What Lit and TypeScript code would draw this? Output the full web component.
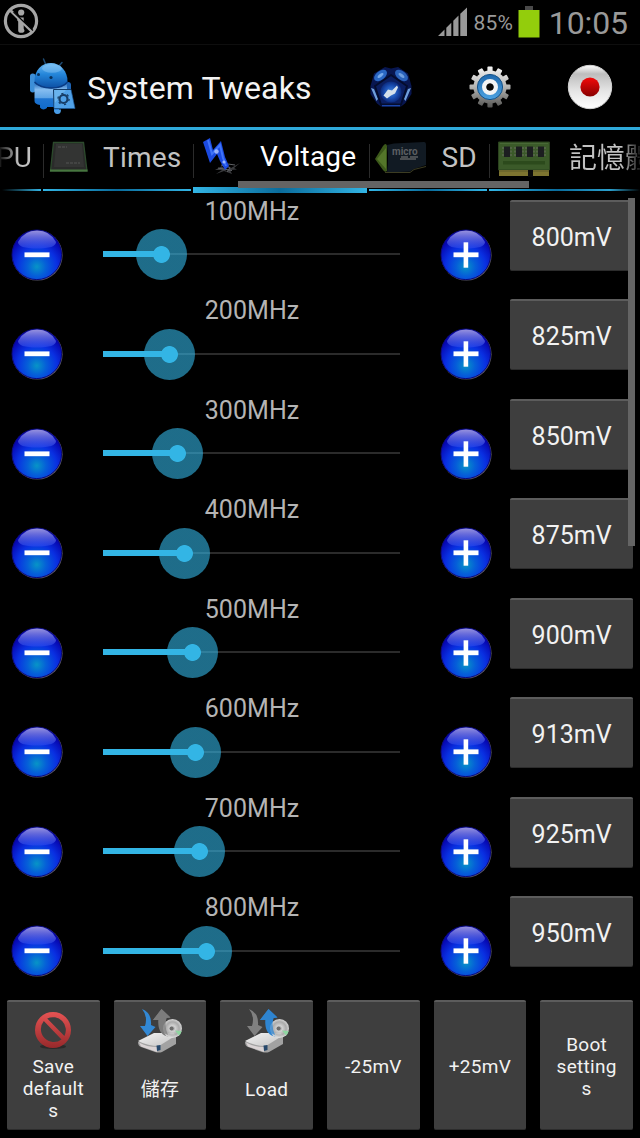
import {LitElement, html, css, svg, nothing} from 'lit';
import {customElement, property, state} from 'lit/decorators.js';
import {classMap} from 'lit/directives/class-map.js';

interface Step {
  mhz: number;
  mv: number;
  pos: number; // thumb offset on the track, px
}

const steps: Step[] = [
  {mhz: 100, mv: 800, pos: 58.7},
  {mhz: 200, mv: 825, pos: 66.5},
  {mhz: 300, mv: 850, pos: 74},
  {mhz: 400, mv: 875, pos: 81},
  {mhz: 500, mv: 900, pos: 89},
  {mhz: 600, mv: 913, pos: 92.5},
  {mhz: 700, mv: 925, pos: 96},
  {mhz: 800, mv: 950, pos: 103},
];

const icons = {
  noInfo: svg`<svg width="36" height="36" viewBox="0 0 36 36">
    <circle cx="18" cy="18" r="15.6" fill="none" stroke="#a6a6a6" stroke-width="3.2"/>
    <path d="M7.500 7.500L29 28.500" stroke="#a6a6a6" stroke-width="3"/>
    <circle cx="18.200" cy="9.500" r="4.200" fill="#000"/>
    <circle cx="18.200" cy="9.500" r="3.100" fill="#a6a6a6"/>
    <path d="M14.300 14.500H20.700V25.500L21.500 27.500Q21.500 29.800 18.200 29.800Q15.200 29.800 15.200 27.500V18.500L14.300 17.500Z" fill="#a6a6a6"/>
    <path d="M10.500 9L30 27.500" stroke="#000" stroke-width="1.100"/>
  </svg>`,

  signal: svg`<svg width="30" height="30" viewBox="0 0 30 30" fill="#999">
    <path d="M0 29L6.5 22.5V29Z M8.3 20.7L13.3 15.7V29H8.3Z M15.3 13.7L20.5 8.5V29H15.3Z M22.3 6.7L29 .4V29H22.3Z"/>
  </svg>`,

  battery: svg`<svg width="22" height="32" viewBox="0 0 22 32">
    <path d="M7 0H15V4H7Z" fill="#4a4a4a"/>
    <path d="M.5 4H21.5V31.5H.5Z" fill="#93cd0c"/>
  </svg>`,

  droid: svg`<svg width="48" height="58" viewBox="0 0 48 58">
    <defs>
      <linearGradient id="dHead" x1="0" y1="0" x2="0" y2="1">
        <stop offset="0" stop-color="#6bb9f2"/><stop offset=".45" stop-color="#2486da"/><stop offset="1" stop-color="#0c4fa4"/>
      </linearGradient>
      <linearGradient id="dBody" x1="0" y1="0" x2="0" y2="1">
        <stop offset="0" stop-color="#2168b8"/><stop offset=".22" stop-color="#86bdf0"/><stop offset=".48" stop-color="#5ea4e6"/><stop offset=".52" stop-color="#1e74d0"/><stop offset="1" stop-color="#0c66c8"/>
      </linearGradient>
    </defs>
    <path d="M18 8L15.5 2 M31 9L34 5.500" stroke="#1d4a72" stroke-width="1.500" stroke-linecap="round"/>
    <rect x="2" y="16.500" width="5.500" height="19" rx="2.700" fill="#3d8fd8"/>
    <rect x="37" y="25" width="6" height="14" rx="3" fill="#1e64b4"/>
    <path d="M6.500 26Q22 36 39 27V47H31V54Q29 58.500 26 54.500V50H19V51Q15 54 12 50.500V48Q6.500 47 6.500 44Z" fill="url(#dBody)"/>
    <path d="M6.500 25C6 13 14 6 23 6C32 6 40 14 39.500 25C33 33 14 33 6.500 25Z" fill="url(#dHead)"/>
    <path d="M6.500 25C14 33 33 33 39.500 25" fill="none" stroke="#0a3c86" stroke-width="1.400"/>
    <ellipse cx="24" cy="11.500" rx="10" ry="4.200" fill="#a5d8fb" opacity=".35"/>
    <circle cx="10.500" cy="17.500" r="1.500" fill="#093058"/>
    <circle cx="23" cy="20.500" r="1.600" fill="#093058"/>
    <path d="M25.500 32.500H43L47 51.500H26Z" fill="#69b3ee" stroke="#123b68" stroke-width="1"/>
    <path d="M26 47L38 33H43L47 51.500H26Z" fill="#3f95e2" opacity=".6"/>
    <circle cx="35.500" cy="42" r="4" fill="none" stroke="#173d66" stroke-width="2.200"/>
    <circle cx="35.500" cy="42" r="5.600" fill="none" stroke="#173d66" stroke-width="1.300" stroke-dasharray="2.200 3.660"/>
    <path d="M26 52.500H33Q33 57 29.500 57T26 52.500Z" fill="#4a9de6"/>
  </svg>`,

  dodeca: svg`<svg width="44" height="42" viewBox="0 0 44 42">
    <defs>
      <radialGradient id="pFace"><stop offset="0" stop-color="#3f84dc"/><stop offset=".6" stop-color="#1a4eb2"/><stop offset="1" stop-color="#0b2a7c"/></radialGradient>
    </defs>
    <path d="M16 1L22 2.500L29 1L39 7.500L42.500 20V28L36 37.500L32 40.500H12L8 37.500L1.500 28V20L5 7.500Z" fill="#081650"/>
    <ellipse cx="11.500" cy="9.500" rx="7.500" ry="4.400" transform="rotate(-38 11.500 9.500)" fill="#2a68c4"/>
    <ellipse cx="32.500" cy="9.500" rx="7.500" ry="4.400" transform="rotate(38 32.500 9.500)" fill="#2a62ba"/>
    <ellipse cx="11.500" cy="9.500" rx="3.500" ry="1.500" transform="rotate(-38 11.500 9.500)" fill="#78aaea"/>
    <ellipse cx="32.500" cy="9.500" rx="3.500" ry="1.500" transform="rotate(38 32.500 9.500)" fill="#6f9fdf"/>
    <path d="M2 22L5 23L9 33L7.500 35Z M42 22L39 23L35 33L36.500 35Z" fill="#6f9fdc"/>
    <path d="M22 9L38 20L32 38.500H12L6 20Z" fill="#0b1e60" stroke="#040c2c" stroke-width="1.800"/>
    <circle cx="22" cy="26" r="10.600" fill="url(#pFace)"/>
    <path d="M14.500 29.500L19 23.500L23 24.500L28 19.500L29 21.500L26 27.500L22 29.500L18 32.500Z" fill="#d4e0ec"/>
    <path d="M13 39.700H31" stroke="#1a45a8" stroke-width="1.400"/>
  </svg>`,

  gear: svg`<svg width="44" height="44" viewBox="-22 -22 44 44">
    <defs>
      <linearGradient id="gMetal" x1="0" y1="0" x2="0" y2="1">
        <stop offset="0" stop-color="#fafafa"/><stop offset=".5" stop-color="#b4b4b2"/><stop offset="1" stop-color="#4e4e4c"/>
      </linearGradient>
      <linearGradient id="gBlue" x1="0" y1="0" x2="0" y2="1">
        <stop offset="0" stop-color="#1e68ad"/><stop offset="1" stop-color="#4da3e2"/>
      </linearGradient>
    </defs>
    <mask id="gMask" maskUnits="userSpaceOnUse" x="-22" y="-22" width="44" height="44">
      <circle r="16.6" fill="#fff"/>
      ${[0, 30, 60, 90, 120, 150].map(a => svg`<rect x="-2.6" y="-20.5" width="5.2" height="41" rx="1" fill="#fff" transform="rotate(${a})"/>`)}
    </mask>
    <rect x="-22" y="-22" width="44" height="44" fill="url(#gMetal)" mask="url(#gMask)"/>
    <circle r="12.6" fill="url(#gBlue)" stroke="#165288" stroke-width="1"/>
    <circle r="5.8" fill="#1c1c1c" stroke="#f2f4f5" stroke-width="4.4"/>
    <circle r="3.5" fill="#080808"/>
  </svg>`,

  record: svg`<svg width="46" height="46" viewBox="0 0 46 46">
    <defs>
      <linearGradient id="rShell" x1="0" y1="0" x2="0" y2="1">
        <stop offset="0" stop-color="#fff"/><stop offset=".2" stop-color="#bdbdbd"/><stop offset=".6" stop-color="#e6e6e6"/><stop offset="1" stop-color="#fff"/>
      </linearGradient>
      <linearGradient id="rDot" x1="0" y1="0" x2="0" y2="1">
        <stop offset="0" stop-color="#f40a0a"/><stop offset="1" stop-color="#870000"/>
      </linearGradient>
    </defs>
    <circle cx="23" cy="23" r="21.700" fill="url(#rShell)" stroke="#d2d2d2" stroke-width="1"/>
    <circle cx="23" cy="23" r="9.600" fill="url(#rDot)"/>
  </svg>`,

  cpu: svg`<svg width="40" height="32" viewBox="0 0 40 32">
    <path d="M4.500 1.500H34.500L38 30H1.500Z" fill="#2a2b2a" stroke="#2c4a2c" stroke-width="1.300"/>
    <path d="M1 29.500H38.500" stroke="#47763f" stroke-width="2"/>
    <path d="M7 3H33L35 26H5Z" fill="#333433"/>
    <path d="M9 6H18 M17 22H31" stroke="#4a4a4a" stroke-width="1.500" stroke-dasharray="3 1"/>
  </svg>`,

  bolt: svg`<svg width="40" height="40" viewBox="0 0 40 40">
    <path d="M13 33L22 28L29 31L38 26L32 31L35 32.500L28 33L30 37L22 34L14 37L20 33Z" fill="#3a3b3e"/>
    <path d="M19 28L28 30.500L25 35 M16 31L30 33.500 M26 27L33 28" stroke="#606266" stroke-width="1"/>
    <path d="M1 5L8 1L11 13L19 4L23 20L27 29L23 33L18 24L15 17L8 26Z" fill="#1b4ae0"/>
    <path d="M6 3L10 17L18 8L21 21L24 29" fill="none" stroke="#3f74fa" stroke-width="2"/>
    <circle cx="14.500" cy="14.500" r="2.200" fill="#b4c8ff" opacity=".8"/>
    <circle cx="22" cy="25" r="1.600" fill="#9ab8ff"/>
  </svg>`,

  sd: svg`<svg width="54" height="34" viewBox="0 0 54 34">
    <path d="M1 18L9 5Q12 1 13 5V30Q11 32 9 29Z" fill="#3c581a"/>
    <path d="M3 18L12 7V28Z" fill="#54762a"/>
    <path d="M13 4L20 2.500L50 1Q52 1 52 4V24L40 28L36 30.500L13 31.500Q15 17 13 4Z" fill="#111a23"/>
    <path d="M11 31.500L36 31.500L40 28.500L52 25.500" fill="none" stroke="#3c3c22" stroke-width="1"/>
    <text x="18" y="14" class="micro">micro</text>
    <path d="M27 16H34 M36 16H44 M26 18H42" stroke="#5c5f62" stroke-width="1.500"/>
  </svg>`,

  ram: svg`<svg width="52" height="36" viewBox="0 0 52 36">
    <path d="M.5 1H51.500V29H.5Z" fill="#3b5a29" stroke="#2b421e" stroke-width="1"/>
    <path d="M2 2.500H50" stroke="#486836" stroke-width="1.200"/>
    <path d="M5 20H47V23.500H5Z" fill="#2c4a1c"/>
    <path d="M6 5.500H12V16H6Z M18 5.500H24V16H18Z M29 5.500H35V16H29Z M40 5.500H46V16H40Z" fill="#1c1e20"/>
    <path d="M5 6V15M13 6V15M17 6V15M25 6V15M28 6V15M36 6V15M39 6V15M47 6V15" stroke="#6a6e62" stroke-width="1" stroke-dasharray="2 1.500"/>
    <path d="M1 29H30V35H1Z M35 29H51V35H35Z" fill="#7d7430"/>
    <path d="M1 30H51" stroke="#5e5a28" stroke-width="1"/>
    <path d="M30 29H35V36H30Z" fill="#0a0a0a"/>
  </svg>`,

  forbid: svg`<svg width="44" height="44" viewBox="0 0 44 44">
    <defs>
      <linearGradient id="fRed" x1="0" y1="0" x2="0" y2="1">
        <stop offset="0" stop-color="#e65353"/><stop offset="1" stop-color="#97292b"/>
      </linearGradient>
    </defs>
    <ellipse cx="22" cy="38.500" rx="13" ry="2.600" fill="#262626" opacity=".8"/>
    <path fill="url(#fRed)" fill-rule="evenodd" d="M22 4A18 18 0 1 1 22 40A18 18 0 1 1 22 4Z M12.800 13A12.900 12.900 0 0 0 30.500 31.500Z M16.200 10.500A12.900 12.900 0 0 1 33.400 28Z"/>
  </svg>`,
};

// drive with two arrows, the active one is blue
const drive = (active: 'save' | 'load') => {
  const down = active === 'save' ? '#3288d4' : '#808080';
  const up = active === 'load' ? '#2f84d0' : '#7c7c7c';
  return svg`<svg width="46" height="46" viewBox="0 0 46 46">
    <defs>
      <radialGradient id="hdDisc"><stop offset="0" stop-color="#8d8d8d"/><stop offset=".3" stop-color="#dedede"/><stop offset=".7" stop-color="#b4b4b4"/><stop offset="1" stop-color="#e4e4e4"/></radialGradient>
      <linearGradient id="hdTop" x1="0" y1="0" x2="1" y2="1"><stop offset="0" stop-color="#f4f4f4"/><stop offset="1" stop-color="#c4c4c4"/></linearGradient>
    </defs>
    <path d="M1 34L18 25.500H37L39 27V36L25 44Q22 45 18 44L4 39Q1 38 1 34Z" fill="#a2a2a2"/>
    <path d="M1 33L17 25H37L38 28L22 38Q11 38 1 33Z" fill="url(#hdTop)"/>
    <path d="M2 34.500Q10 39 20 39V44L4 38.500Z" fill="#dad4d5"/>
    <path d="M19.500 37.500L23.500 37V42L20 43Z" fill="#26486b"/>
    <path d="M24.500 1L33.500 9.500L29.500 10Q27 18 32.500 29Q20 27 21.500 12H16Z" fill="${up}"/>
    <circle cx="35.500" cy="20.500" r="9.500" fill="url(#hdDisc)" opacity=".92"/>
    <path d="M38 22.500L44.500 23Q44 26 42 27.500Z" fill="#8fd6a1"/>
    <circle cx="34.500" cy="20.500" r="2" fill="#6c6c6c"/>
    <path d="M24.500 1L33.500 9.500L29.500 10Q27 18 31 27Q21 25 21.500 12H16Z" fill="${up}" opacity=".75"/>
    <path d="M5 1Q15 5 14 17L18.500 19L10.500 28L3 18L8 18Q11 8 5 1Z" fill="${down}"/>
  </svg>`;
};

@customElement('glossy-ball')
export class GlossyBall extends LitElement {
  static override styles = css`
    :host {
      display: block;
      width: 54px;
      height: 54px;
    }
    svg {
      display: block;
    }
  `;

  @property()
  sign = 'minus';

  override render() {
    return html`
      <svg width="54" height="54" viewBox="0 0 54 54">
        <defs>
          <radialGradient id="ball" cx=".5" cy=".74" r=".62">
            <stop offset="0" stop-color="#0795c6"/>
            <stop offset=".3" stop-color="#0560d8"/>
            <stop offset=".65" stop-color="#0930e2"/>
            <stop offset="1" stop-color="#0606b0"/>
          </radialGradient>
          <linearGradient id="shine" x1="0" y1="0" x2="0" y2="1">
            <stop offset="0" stop-color="#a09ae0" stop-opacity=".95"/>
            <stop offset="1" stop-color="#3350ee" stop-opacity=".5"/>
          </linearGradient>
        </defs>
        <circle cx="27.300" cy="27.300" r="25.300" fill="#5c5a68"/>
        <circle cx="26.800" cy="26.800" r="24.800" fill="url(#ball)" stroke="#08087c" stroke-width="1"/>
        <path d="M8 14Q14 2.500 27 2.500T46 14Q46 20.500 27 20.500T8 14Z" fill="url(#shine)"/>
        <path d="M14.500 24.400H39.500V29.200H14.500Z" fill="#fff"/>
        ${this.sign === 'plus' ? svg`<path d="M24.600 14.300H29.200V39.700H24.600Z" fill="#fff"/>` : nothing}
      </svg>
    `;
  }
}

@customElement('voltage-row')
export class VoltageRow extends LitElement {
  static override styles = css`
    :host {
      display: grid;
      grid-template-columns: 74px 356px 71px 132px;
      align-items: start;
      height: 99.5px;
    }

    glossy-ball {
      margin-top: 30.600px;
      justify-self: center;
    }

    .label {
      height: 28px;
      line-height: 28px;
      padding-top: .6px;
      box-sizing: border-box;
      text-align: center;
      font-size: 25px;
      letter-spacing: .05px;
      color: #b4b4b4;
    }

    .slider {
      position: relative;
      width: 297px;
      height: 58px;
      margin: 0 0 0 29px;
      display: flex;
      align-items: center;
    }

    .track {
      width: 100%;
      height: 2px;
      background: #2b2b2b;
    }

    .fill {
      position: absolute;
      left: 0;
      top: 26px;
      height: 6px;
      background: #33b5e5;
    }

    .thumb {
      position: absolute;
      top: 4px;
      width: 51px;
      height: 51px;
      margin-left: -25.5px;
      border-radius: 50%;
      background: radial-gradient(circle, #33b5e5 8px, rgba(51, 181, 229, .6) 8.800px);
    }

    .mv {
      margin: 2.700px 0 0 9.400px;
      width: 122.600px;
      height: 71px;
      box-sizing: border-box;
      border: 0;
      border-top: 2px solid #5c5c5c;
      border-bottom: 1px solid #2c2c2c;
      border-radius: 2px;
      padding: 3px 0 0;
      background: #3e3e3e;
      color: #f2f2f2;
      font: 25px Roboto, sans-serif;
      letter-spacing: .05px;
    }
  `;

  @property({type: Object})
  step!: Step;

  override render() {
    return html`
      <glossy-ball sign="minus"></glossy-ball>
      <div>
        <div class="label">${this.step.mhz}MHz</div>
        <div class="slider">
          <div class="track"></div>
          <div class="fill" style="width: ${this.step.pos}px"></div>
          <div class="thumb" style="left: ${this.step.pos}px"></div>
        </div>
      </div>
      <glossy-ball sign="plus"></glossy-ball>
      <button class="mv">${this.step.mv}mV</button>
    `;
  }
}

@customElement('app-root')
export class AppRoot extends LitElement {
  static override styles = css`
    * {
      box-sizing: border-box;
    }

    :host {
      display: flex;
      flex-direction: column;
      width: 640px;
      height: 1138px;
      overflow: hidden;
      background: #000;
      color: #f3f3f3;
      font-family: Roboto, "Noto Sans CJK TC", sans-serif;
    }

    svg {
      display: block;
      flex: none;
    }

    .status {
      height: 45px;
      flex: none;
      display: flex;
      align-items: center;
      padding: 0 12px 1px 2.500px;
      border-bottom: 1px solid #0e0e0e;
      color: #999;
    }

    .status > svg {
      margin-bottom: 1px;
    }

    .status .right {
      margin-left: auto;
      display: flex;
      align-items: center;
    }

    .right svg {
      margin-top: 1px;
    }

    .percent {
      margin: 3px 4.500px 0 5px;
      font-size: 21px;
      letter-spacing: .3px;
    }

    .clock {
      margin-left: 9px;
      font-size: 32px;
      line-height: 40px;
      padding-top: 2px;
      letter-spacing: -.1px;
    }

    .header {
      height: 85px;
      flex: none;
      display: flex;
      align-items: center;
      padding: 0 27px 0 28px;
      border-bottom: 3px solid #2fa9da;
    }

    .title {
      margin: 3px auto 0 11px;
      font-size: 32px;
      letter-spacing: .14px;
    }

    .actions {
      display: flex;
      align-items: center;
      gap: 55px;
      padding-top: 1px;
    }

    .tabs {
      position: relative;
      height: 63px;
      flex: none;
      display: grid;
      grid-template-columns: 43px 150px 175.5px 120.5px 151px;
      overflow: hidden;
    }

    .tab {
      display: flex;
      flex-direction: column;
      overflow: hidden;
      color: #c2c2c2;
      font-size: 28px;
      white-space: nowrap;
    }

    .cell {
      height: 34px;
      flex: none;
      margin-top: 14px;
      display: flex;
      align-items: center;
      border-left: 1.500px solid #2b2b2b;
    }

    .cell span {
      line-height: 34px;
      margin-top: -6px;
    }

    .strip {
      height: 2px;
      flex: none;
      margin: 11px 2px 0 0;
      background: linear-gradient(90deg, #33b5e5, #0a6c9c 50%, #33b5e5);
    }

    .tab.active {
      color: #fff;
    }

    .tab.active .strip {
      height: 6px;
      margin-top: 9px;
    }

    .tab.first .cell {
      border: 0;
      justify-content: flex-end;
      padding-right: 11px;
    }

    .tab.first span {
      background: linear-gradient(90deg, #000 36%, #c2c2c2 75%);
      -webkit-background-clip: text;
      color: transparent;
    }

    .tab.first .strip {
      background: linear-gradient(90deg, #000 2px, #33b5e5);
    }

    .tab.last span {
      margin-top: -4px;
      background: linear-gradient(90deg, #c2c2c2 52px, #000 74px);
      -webkit-background-clip: text;
      color: transparent;
    }

    .tab.last .strip {
      margin-right: 0;
      background: linear-gradient(90deg, #33b5e5, #0a6c9c 45%, #2b9fcc 80%, #000);
    }

    .times svg { margin: -8px 14px 0 5px; }
    .times span { letter-spacing: .2px; }
    .voltage svg { margin: -9px 18px 0 8px; }
    .voltage .cell span { margin-top: -9px; letter-spacing: .2px; }
    .sd svg { margin: -7px 14px 0 4px; }
    .mem svg { margin: -5px 19px 0 8px; }

    .micro {
      font: bold 10px Roboto, sans-serif;
      fill: #5c5f62;
    }

    .scroll-x {
      position: absolute;
      left: 237.500px;
      top: 50.500px;
      width: 291.500px;
      height: 7px;
      background: #646464;
    }

    .list {
      position: relative;
      height: 800px;
      flex: none;
      padding-top: 4px;
      overflow: hidden;
    }

    .scroll-y {
      position: absolute;
      right: 5.500px;
      top: 5px;
      width: 7px;
      height: 348px;
      background: #646464;
    }

    .bottom {
      flex: 1;
      display: grid;
      grid-template-columns: repeat(6, 1fr);
    }

    .action {
      margin: 7px 7px 8px;
      border: 0;
      border-top: 2px solid #5c5c5c;
      border-bottom: 1px solid #2c2c2c;
      border-radius: 2px;
      padding: 3px 14px 0;
      background: #3e3e3e;
      color: #f2f2f2;
      font: 19px/22.300px Roboto, "Noto Sans CJK TC", sans-serif;
      letter-spacing: .3px;
      display: flex;
      flex-direction: column;
      align-items: center;
    }

    .action.picture {
      padding: 6px 14px 3px;
    }

    .action .text {
      flex: 1;
      width: 64px;
      display: flex;
      align-items: center;
      justify-content: center;
      overflow-wrap: anywhere;
    }
  `;

  @state()
  private activeTab = 'voltage';

  private tab(name: string, label: string, icon: unknown, extra = '') {
    const classes = {tab: true, [name]: true, active: this.activeTab === name, [extra || name]: true};
    return html`
      <div class=${classMap(classes)} @click=${() => (this.activeTab = name)}>
        <div class="cell">${icon}<span>${label}</span></div>
        <div class="strip"></div>
      </div>
    `;
  }

  private action(label: string, icon?: unknown) {
    return html`
      <button class=${classMap({action: true, picture: !!icon})}>
        ${icon ?? nothing}
        <div class="text">${label}</div>
      </button>
    `;
  }

  override render() {
    return html`
      <div class="status">
        ${icons.noInfo}
        <div class="right">
          ${icons.signal}
          <span class="percent">85%</span>
          ${icons.battery}
          <span class="clock">10:05</span>
        </div>
      </div>

      <div class="header">
        ${icons.droid}
        <div class="title">System Tweaks</div>
        <div class="actions">${icons.dodeca}${icons.gear}${icons.record}</div>
      </div>

      <div class="tabs">
        ${this.tab('cpu', 'CPU', nothing, 'first')}
        ${this.tab('times', 'Times', icons.cpu)}
        ${this.tab('voltage', 'Voltage', icons.bolt)}
        ${this.tab('sd', 'SD', icons.sd)}
        ${this.tab('mem', '記憶體', icons.ram, 'last')}
        <div class="scroll-x"></div>
      </div>

      <div class="list">
        ${steps.map(s => html`<voltage-row .step=${s}></voltage-row>`)}
        <div class="scroll-y"></div>
      </div>

      <div class="bottom">
        ${this.action('Save defaults', icons.forbid)}
        ${this.action('儲存', drive('save'))}
        ${this.action('Load', drive('load'))}
        ${this.action('-25mV')}
        ${this.action('+25mV')}
        ${this.action('Boot settings')}
      </div>
    `;
  }
}

declare global {
  interface HTMLElementTagNameMap {
    'app-root': AppRoot;
    'voltage-row': VoltageRow;
    'glossy-ball': GlossyBall;
  }
}
